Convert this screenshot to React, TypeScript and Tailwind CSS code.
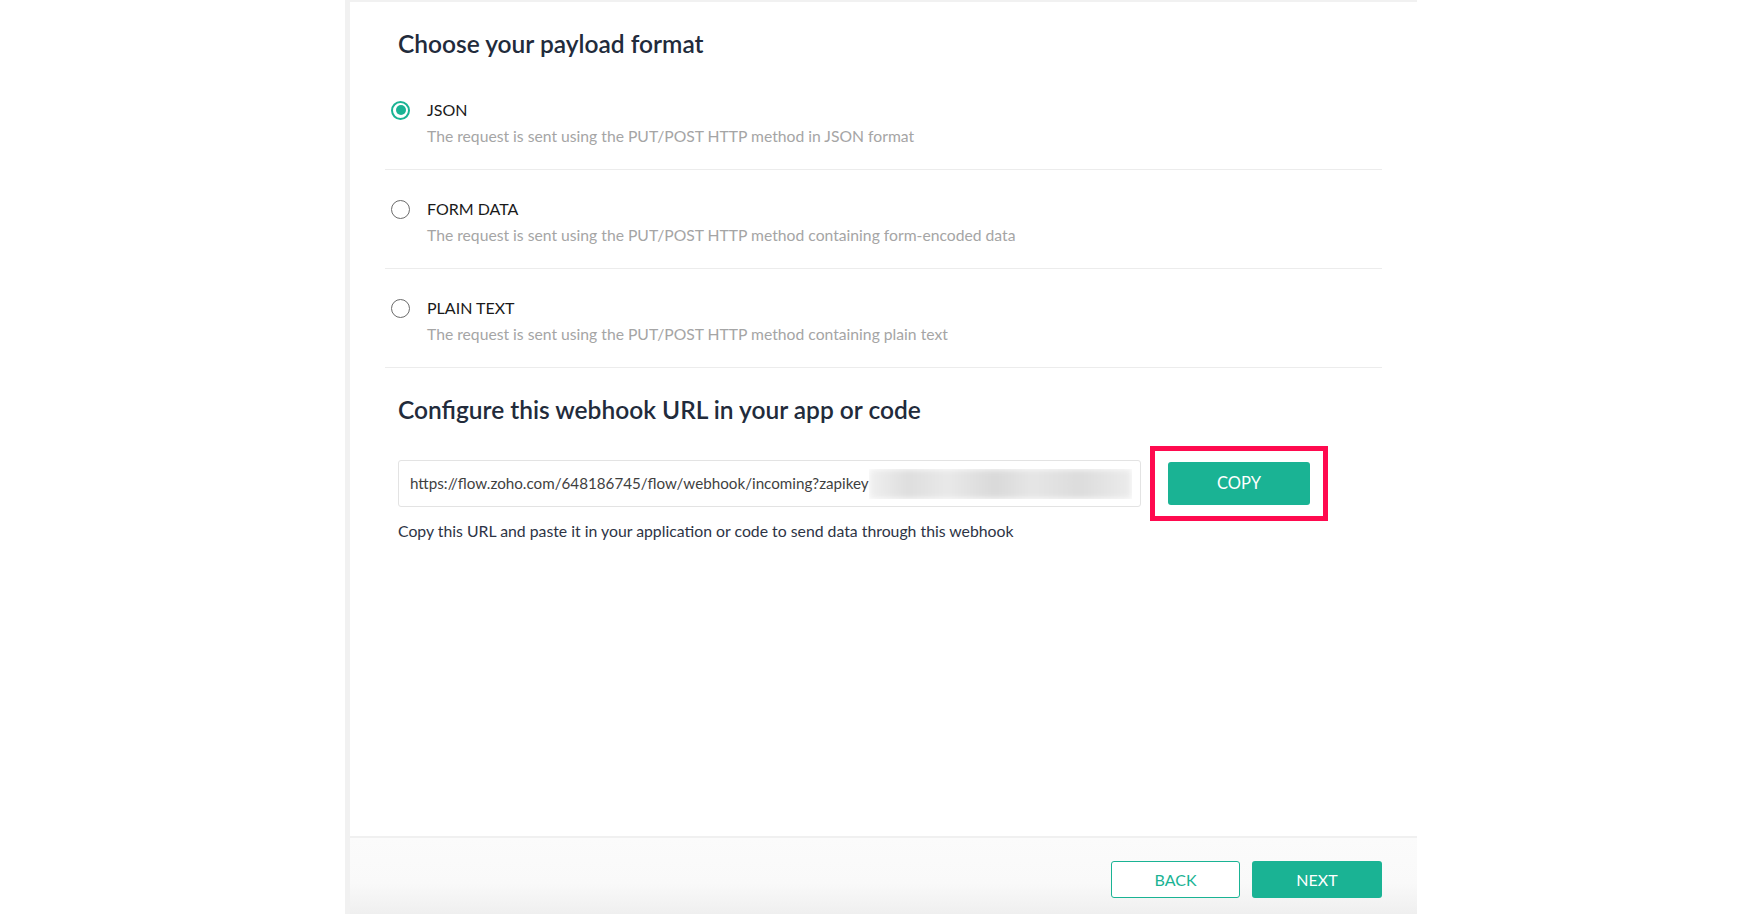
const formats = [
  {
    id: "json",
    label: "JSON",
    desc: "The request is sent using the PUT/POST HTTP method in JSON format",
  },
  {
    id: "form",
    label: "FORM DATA",
    desc: "The request is sent using the PUT/POST HTTP method containing form-encoded data",
  },
  {
    id: "text",
    label: "PLAIN TEXT",
    desc: "The request is sent using the PUT/POST HTTP method containing plain text",
  },
]

const Radio = ({ checked }: { checked: boolean }) =>
  checked ? (
    <span className="flex h-[19px] w-[19px] shrink-0 items-center justify-center rounded-full border-2 border-[#1ab394]">
      <span className="h-[10px] w-[10px] rounded-full bg-[#1ab394]" />
    </span>
  ) : (
    <span className="h-[19px] w-[19px] shrink-0 rounded-full border-[1.5px] border-[#6b6b6b]" />
  )

export default function App() {
  const selected = "json"

  return (
    <div className="h-screen w-full overflow-hidden bg-white font-['Lato','Liberation_Sans',sans-serif]">
      <div className="ml-[345px] flex h-screen w-[1072px] flex-col border-l-[5px] border-t-2 border-[#f1f1f1]">
        <div className="flex-1 px-[35px]">
          <h2 className="pl-[13px] pt-[27px] text-[24.5px] font-semibold leading-[30px] text-[#222b3b]">
            Choose your payload format
          </h2>

          <div className="mt-[12px]">
            {formats.map((f) => (
              <div key={f.id} className="border-b border-[#ececec] pb-[22px] pl-[6px] pt-[27px]">
                <div className="flex h-6 items-center gap-[17px]">
                  <Radio checked={f.id === selected} />
                  <span className="text-[16px] text-[#1a1a1a]">{f.label}</span>
                </div>
                <p className="mt-[3px] pl-[36px] text-[15.7px] leading-[22px] text-[#a5a5a5]">{f.desc}</p>
              </div>
            ))}
          </div>

          <h2 className="mt-[27px] pl-[13px] text-[24.5px] font-semibold leading-[30px] text-[#222b3b]">
            Configure this webhook URL in your app or code
          </h2>

          <div className="mt-[21px] flex items-center gap-[9px] pl-[13px]">
            <div className="flex h-[47px] w-[743px] items-center rounded-[3px] border-[1.5px] border-[#e3e3e3] pl-[11px] pr-[8px]">
              <span className="whitespace-nowrap text-[15.2px] text-[#3f3f3f]">
                https://flow.zoho.com/648186745/flow/webhook/incoming?zapikey
              </span>
              <div className="h-[30px] flex-1 overflow-hidden">
                <div className="h-full w-full bg-[linear-gradient(90deg,#f0f0f0,#dedede_15%,#e9e9e9_30%,#d9d9d9_48%,#e6e6e6_62%,#dcdcdc_80%,#ececec)] blur-[3px]" />
              </div>
            </div>
            <div className="border-[5px] border-[#ff0a4f] px-[13px] py-[11px]">
              <button className="flex h-[43px] w-[142px] items-center justify-center rounded-[3px] bg-[#1ab394] text-[16.5px] text-white">
                COPY
              </button>
            </div>
          </div>

          <p className="pl-[13px] text-[15.8px] leading-[20px] text-[#2d3445]">
            Copy this URL and paste it in your application or code to send data through this webhook
          </p>
        </div>

        <div className="flex h-[78px] shrink-0 items-start justify-end gap-[12px] border-t-2 border-[#f0f0f0] bg-[linear-gradient(180deg,#fbfbfb,#f9f9f9_60%,#efefef)] pr-[35px] pt-[23px]">
          <button className="flex h-[37px] w-[129px] items-center justify-center rounded-[3px] border-[1.5px] border-[#1ab394] bg-white text-[16px] text-[#1ab394]">
            BACK
          </button>
          <button className="flex h-[37px] w-[130px] items-center justify-center rounded-[3px] bg-[#1ab394] text-[16px] text-white">
            NEXT
          </button>
        </div>
      </div>
    </div>
  )
}
